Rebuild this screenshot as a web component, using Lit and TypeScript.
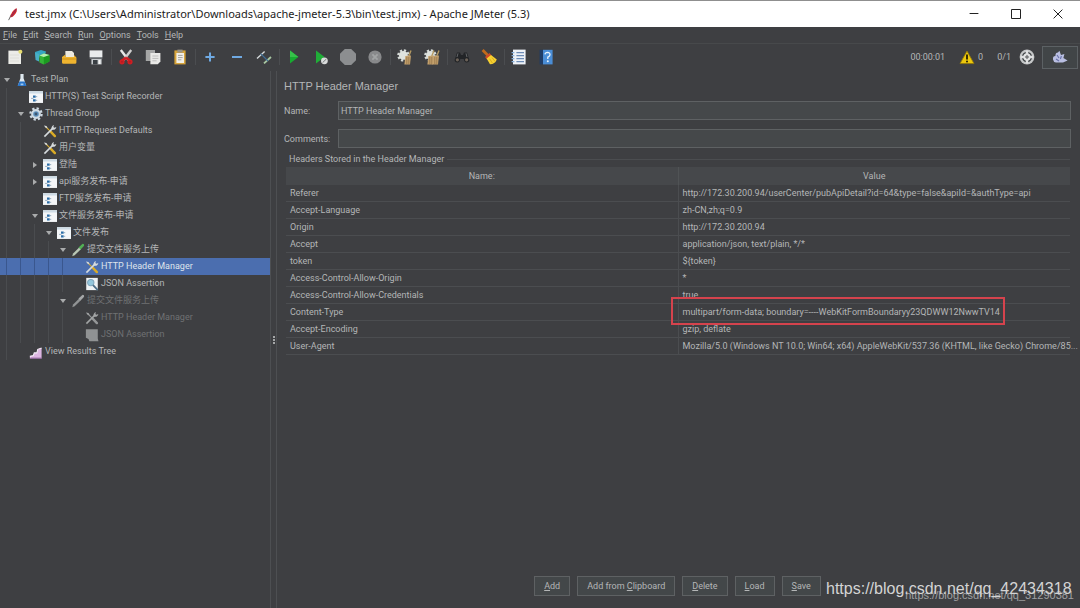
import { LitElement, html, svg, css, nothing } from "lit";
import { customElement, property, state } from "lit/decorators.js";

type Node = { text: string; level: number; icon: string; arrow?: "open" | "closed"; off?: boolean };

const TREE: Node[] = [
  { text: "Test Plan", level: 0, icon: "flask", arrow: "open" },
  { text: "HTTP(S) Test Script Recorder", level: 1, icon: "panel" },
  { text: "Thread Group", level: 1, icon: "gear", arrow: "open" },
  { text: "HTTP Request Defaults", level: 2, icon: "tools" },
  { text: "用户变量", level: 2, icon: "tools" },
  { text: "登陆", level: 2, icon: "panel", arrow: "closed" },
  { text: "api服务发布-申请", level: 2, icon: "panel", arrow: "closed" },
  { text: "FTP服务发布-申请", level: 2, icon: "panel" },
  { text: "文件服务发布-申请", level: 2, icon: "panel", arrow: "open" },
  { text: "文件发布", level: 3, icon: "panel", arrow: "open" },
  { text: "提交文件服务上传", level: 4, icon: "dropper", arrow: "open" },
  { text: "HTTP Header Manager", level: 5, icon: "tools" },
  { text: "JSON Assertion", level: 5, icon: "lens" },
  { text: "提交文件服务上传", level: 4, icon: "dropperOff", arrow: "open", off: true },
  { text: "HTTP Header Manager", level: 5, icon: "toolsOff", off: true },
  { text: "JSON Assertion", level: 5, icon: "lensOff", off: true },
  { text: "View Results Tree", level: 1, icon: "chart" },
];

const HEADERS: [string, string][] = [
  ["Referer", "http://172.30.200.94/userCenter/pubApiDetail?id=64&type=false&apiId=&authType=api"],
  ["Accept-Language", "zh-CN,zh;q=0.9"],
  ["Origin", "http://172.30.200.94"],
  ["Accept", "application/json, text/plain, */*"],
  ["token", "${token}"],
  ["Access-Control-Allow-Origin", "*"],
  ["Access-Control-Allow-Credentials", "true"],
  ["Content-Type", "multipart/form-data; boundary=----WebKitFormBoundaryy23QDWW12NwwTV14"],
  ["Accept-Encoding", "gzip, deflate"],
  ["User-Agent", "Mozilla/5.0 (Windows NT 10.0; Win64; x64) AppleWebKit/537.36 (KHTML, like Gecko) Chrome/85..."],
];

const tools = (a: string, b: string) => svg`
  <path d="M3 3 L13 13" stroke=${b} stroke-width="1.4"/>
  <path d="M9 9 L13.6 13.8" stroke=${b} stroke-width="2.8" stroke-linecap="round"/>
  <path d="M1.6 14.4 L11 5" stroke=${a} stroke-width="1.8"/>
  <path d="M10 6.4 Q8.6 2.6 12.6 1 L11.8 3.4 L13 4.4 L15.2 3.4 Q14.6 7.4 10 6.4Z" fill=${a}/>
  <path d="M1 1.6 L4 2.4 L5.4 5.2 L3 4.4Z" fill=${a}/>`;
const dropper = (a: string, b: string) => svg`
  <path d="M1.4 15 L2.4 12 L9.6 4.8 L11.6 6.8 L4.2 14Z" fill=${a}/>
  <path d="M8.6 5 L13 1 Q15.4 .8 15 3.2 L11 7.4Z" fill=${b}/>`;
const gear = (a: string, hub: string) => svg`
  <circle cx="8" cy="8" r="6.4" fill="none" stroke=${a} stroke-width="2.6" stroke-dasharray="2.6 2.4"/>
  <circle cx="8" cy="8" r="4.4" fill=${hub} stroke=${a} stroke-width="2.4"/>
  <circle cx="8" cy="8" r="1.6" fill="#3d5570"/>`;
const cog = svg`
  <circle cx="6.4" cy="6.4" r="5" fill="none" stroke="#d6dbd8" stroke-width="2.4" stroke-dasharray="2.2 1.7"/>
  <circle cx="6.4" cy="6.4" r="4.4" fill="#dfe3de"/>`;
const broom = (x: number) => svg`
  <path d=${`M${x + 3.4} 7 L${x + 5.6} 1.4`} stroke="#b59a62" stroke-width="1.4"/>
  <path d=${`M${x} 7 L${x + 5.6} 6.4 L${x + 4.6} 15.4 L${x - 1} 15.4Z`} fill="#c3a06c"/>
  <path d=${`M${x + 1.4} 8 V15 M${x + 3.4} 8 V15`} stroke="#8e6f43" stroke-width=".7"/>`;

const ICONS: Record<string, unknown> = {
  feather: svg`<path d="M3 15 L6.4 8" stroke="#555" stroke-width="1"/><path d="M5 12 Q5.4 5 12 1 Q13.6 5 9.6 9 Q8 11.6 5 12Z" fill="#d22b2b"/><path d="M6 11 L11.6 2.4" stroke="#7d2b66" stroke-width="1"/>`,
  flask: svg`<path d="M6.2 1 H9.8 V6 L12.8 14.6 H3.2 L6.2 6Z" fill="#dfe8ef"/><path d="M5 9.8 H11 L13 14.8 H3Z" fill="#2874c9"/><path d="M6.4 12 H9.6 V14 H6.4Z" fill="#9cc6ee"/>`,
  panel: svg`<path d="M0 1.4 H16 V14.8 H0Z" fill="#f4f6f8"/><path d="M0 1.4 H16 V4 H0Z" fill="#cfdce6"/><path d="M4.6 6.4 H7.6 V8.8 H4.6Z M4.6 10.6 H7.6 V13 H4.6Z" fill="#2a6ca6"/><path d="M2.4 9.6 H5 M8 7.6 H9.4 M8 11.8 H9.4" stroke="#8ca2b6" stroke-width="1"/>`,
  gear: gear("#cfdae3", "#5d91bd"),
  tools: tools("#d5dadd", "#d8aa27"),
  toolsOff: tools("#a2a4a5", "#949697"),
  dropper: dropper("#b8c6b4", "#52b055"),
  dropperOff: dropper("#919394", "#a6a8a9"),
  lens: svg`<path d="M1.4 1 H14.6 V15 H1.4Z" fill="#eff3f5"/><circle cx="6.6" cy="6.4" r="3.6" fill="#93c7dd" stroke="#7fa5bb" stroke-width="1.2"/><path d="M9.2 9.2 L14.6 15" stroke="#4c6f88" stroke-width="2"/>`,
  lensOff: svg`<path d="M1 1.4 H14.6 V12 L15.4 15 H5 L4 12.6 L1 11Z" fill="#909293"/>`,
  chart: svg`<path d="M1 15.4 V12.8 L5 12 L6 9 L9 9 L10 5 L14.4 3.4 V15.4Z" fill="#dcb6e2"/><path d="M1 13 L5 12 L6 9 L9 9 L10 5 L14.4 3.4" stroke="#f5eef7" stroke-width="1.2" fill="none"/><path d="M2 15 H14.6" stroke="#8d5c99" stroke-width="1"/>`,
  new: svg`<path d="M1.4 1.6 H14 V15 H1.4Z" fill="#ecece8"/><path d="M3 6 H12 M3 9 H12 M3 12 H12" stroke="#dcdcd6" stroke-width=".8"/><circle cx="13.4" cy="2.8" r="2" fill="#e5db70"/>`,
  cubes: svg`<path d="M1 3 L7 1 L12 2.6 L11 6 L2 10Z" fill="#35a5c2"/><path d="M1 3.4 L5 5 V12.6 L1.6 11Z" fill="#49aec6"/><path d="M5.4 6.4 L10 4.6 L15.4 6 V12.4 L9.6 15.4 L5.4 13.4Z" fill="#34b437"/><path d="M9.8 8 L15.4 6 V12.4 L9.8 15.4Z" fill="#1b9a20"/><path d="M5.4 6.4 L10 4.6 L15.4 6 L9.8 8Z" fill="#b6efb0"/>`,
  folder: svg`<path d="M4.4 2 H11 L13 4 V9 H4.4Z" fill="#ece9df"/><path d="M1 8 L4.4 5.4 V8 H13 V6 L15.4 8.6 V13.6 Q15.4 14.8 14 14.8 H2.4 Q1 14.8 1 13.6Z" fill="#efb42f"/><path d="M1 10 H15.4" stroke="#c88a13" stroke-width=".8"/>`,
  save: svg`<path d="M1.6 1.4 H14.4 V8 H1.6Z" fill="#e9ebec"/><path d="M1.6 8 H14.4 V9.6 H1.6Z" fill="#82878b"/><path d="M3.4 10 H13.6 V15.4 H3.4Z" fill="#c7cbce"/><path d="M5 11 H9.6 V15.4 H5Z" fill="#3a3f44"/><path d="M10.6 11 H12.4 V15 H10.6Z" fill="#f5f5f5"/>`,
  cut: svg`<path d="M2.8 1 L10.4 11" stroke="#e8e8e8" stroke-width="2.4"/><path d="M13.2 1 L5.6 11" stroke="#cfcfcf" stroke-width="2.4"/><path d="M8 8.6 L12 11.6 M8 8.6 L4 11.6" stroke="#cf1d22" stroke-width="2.6"/><circle cx="4" cy="12.8" r="1.6" fill="#7c2022" stroke="#cf1d22" stroke-width="2"/><circle cx="12" cy="12.8" r="1.6" fill="#7c2022" stroke="#cf1d22" stroke-width="2"/>`,
  copy: svg`<path d="M.8 1 H10 V12 H.8Z" fill="#a5a6a6"/><path d="M5.4 4 H15.4 V12.6 L12.8 15.2 H5.4Z" fill="#e9e9e7"/><path d="M7.4 7 H13.4 M7.4 9.4 H13.4 M7.4 11.8 H11.6" stroke="#b8b8b8" stroke-width=".9"/>`,
  paste: svg`<path d="M2.4 1.4 H13.6 V15.4 H2.4Z" fill="#d7a43a"/><path d="M4.4 4 H12 V14 H4.4Z" fill="#f2f0e8"/><path d="M5.4 .6 H10.6 V3.6 H5.4Z" fill="#9a9486"/><path d="M6 6.4 H10.6 M6 8.6 H10.6 M6 10.8 H9.4" stroke="#9a9a98" stroke-width=".9"/>`,
  plus: svg`<path d="M8 3.4 V12.6 M3.4 8 H12.6" stroke="#6fa9e2" stroke-width="2"/>`,
  minus: svg`<path d="M3 8 H13" stroke="#6fa9e2" stroke-width="2"/>`,
  toggle: svg`<path d="M1 9.4 L8.6 2.6" stroke="#d5dadc" stroke-width="1.4"/><path d="M8 14.4 L15 8" stroke="#a9c8a3" stroke-width="1.8"/><path d="M4.6 4.6 L12 12" stroke="#3e6e96" stroke-width="1.2"/>`,
  play: svg`<path d="M4 1.6 L12.4 8 L4 14.6Z" fill="#18aa31"/><path d="M4 1.6 L12.4 8 H4Z" fill="#36c14a"/>`,
  playNo: svg`<path d="M3 1.6 L11.6 8 L3 14.4Z" fill="#20ae38"/><circle cx="11.4" cy="11.8" r="3.4" fill="#d9dbdb"/><path d="M9.6 13.6 L13.4 10" stroke="#777b7c" stroke-width="1"/>`,
  stop: svg`<path d="M4.8 0 H11.2 L16 4.8 V11.2 L11.2 16 H4.8 L0 11.2 V4.8Z" fill="#8c8e90"/>`,
  stopX: svg`<circle cx="8" cy="8" r="6.6" fill="#88898b"/><path d="M5.4 5.4 L10.6 10.6 M10.6 5.4 L5.4 10.6" stroke="#a2a4a5" stroke-width="1.8"/>`,
  sweep: svg`${cog}${broom(8.4)}`,
  sweepAll: svg`${cog}${broom(4.4)}${broom(9.4)}`,
  find: svg`<path d="M3 3.4 H6 L7 6 H9 L10 3.4 H13 L15.4 11 Q15.4 13.4 12.6 13.4 Q10 13.4 9.8 10 H6.2 Q6 13.4 3.4 13.4 Q.6 13.4 .6 11Z" fill="#222427"/><circle cx="3.4" cy="10.8" r="1.6" fill="#6c6258"/><circle cx="12.6" cy="10.8" r="1.6" fill="#6c6258"/><path d="M4 4.4 L3 8 M12 4.4 L13 8" stroke="#75777a" stroke-width=".8"/>`,
  brush: svg`<path d="M1.6 1 L7 6.4" stroke="#c06a1c" stroke-width="2.8"/><path d="M4 8 L8.6 4 L10.6 6.6 L6 10.4Z" fill="#d04a28"/><path d="M5.6 9.6 L10 6 L15.8 10.4 Q14 15 9 15.2Z" fill="#f6d030"/><path d="M8.6 9.8 L11.4 14 M11 8.6 L14 12.4" stroke="#cf9d18" stroke-width=".7"/>`,
  list: svg`<path d="M2 .6 H14.6 V15.4 H2Z" fill="#eef2f7"/><path d="M5.4 3.6 H13 M5.4 6.6 H13 M5.4 9.6 H13 M5.4 12.6 H13" stroke="#6d8cb6" stroke-width="1.1"/><path d="M.6 3.6 H3.4 M.6 6.6 H3.4 M.6 9.6 H3.4 M.6 12.6 H3.4" stroke="#8ab2dd" stroke-width="1.2"/>`,
  help: svg`<path d="M1.6 .8 H5 V15.4 H1.6Z" fill="#1f3c66"/><path d="M5 .8 H14.6 V15.4 H5Z" fill="#4a8dd6"/><path d="M7 5.4 Q7.2 3.4 9.6 3.4 Q12.2 3.6 12 5.8 Q11.8 7.2 9.8 8.2 V10" fill="none" stroke="#e8f2fc" stroke-width="1.3"/><circle cx="9.8" cy="12.2" r="1" fill="#e8f2fc"/>`,
  warn: svg`<path d="M8 2 L15 14.6 H1Z" fill="#ecc70c" stroke="#8f7506" stroke-width=".8" stroke-linejoin="round"/><path d="M8 5.6 V10.6" stroke="#231d02" stroke-width="1.8"/><circle cx="8" cy="12.6" r="1" fill="#231d02"/>`,
  target: svg`<circle cx="8" cy="8" r="7.4" fill="#c4c6c7"/><circle cx="8" cy="8" r="4.4" fill="#e6e7e7" stroke="#44484b" stroke-width="1.5"/><path d="M8 1.6 V14.4 M1.6 8 H14.4" stroke="#dfe0e1" stroke-width="2.4"/><path d="M8 6 V10 M6 8 H10" stroke="#57595b" stroke-width="1"/>`,
  cloud: svg`<path d="M1 10.4 Q.6 7 3.4 7 Q3.4 3.6 6 3.6 L7.4 1.8 L9 6 L12.4 5 L11.4 9 L15.6 11.6 L11 13.4 H4 Q1.4 13 1 10.4Z" fill="#b9bfe2"/><path d="M5 6 L7 9 M9.4 7 L8.4 10 M4 10 L7 12" stroke="#6870a8" stroke-width="1.1"/>`,
  min: svg`<path d="M3.6 7.5 H12.4" stroke="#222"/>`,
  max: svg`<path d="M3.5 3.5 H12.5 V12.5 H3.5Z" fill="none" stroke="#222"/>`,
  close: svg`<path d="M3.6 3.6 L12.4 12.4 M12.4 3.6 L3.6 12.4" stroke="#222"/>`,
};

@customElement("ui-icon")
class UiIcon extends LitElement {
  @property() name = "";
  static styles = css`
    :host { display: block; flex: none; width: 16px; height: 16px; }
    svg { display: block; width: 100%; height: 100%; }
  `;
  render() {
    return html`<svg viewBox="0 0 16 16" aria-hidden="true">${ICONS[this.name] ?? nothing}</svg>`;
  }
}

@customElement("plan-tree")
class PlanTree extends LitElement {
  @state() selected = 11;
  static styles = css`
    :host { display: block; }
    .list { margin: 0; padding: 0; list-style: none; }
    .row {
      display: flex; align-items: stretch; width: 100%; height: 17px; padding: 0;
      border: 0; background: none; color: #b4b6b7; font: inherit; text-align: left; white-space: nowrap;
    }
    .on { background: #4b6eaf; color: #dfe4ec; }
    .off { color: #6f7173; }
    .guides { display: flex; margin-left: -7px; padding-right: 7px; }
    .guide { flex: none; width: 14px; box-sizing: border-box; border-right: 1px solid rgba(120, 124, 126, 0.22); }
    .on .guide { border-color: rgba(30, 45, 80, 0.35); }
    .arrow { flex: none; width: 14px; display: grid; place-items: center; }
    .arrow svg { width: 6px; height: 6px; }
    .icon { width: 14px; height: 14px; margin-left: 1px; align-self: center; }
    .text { padding-left: 2px; line-height: 17px; }
  `;
  render() {
    return html`<ul class="list">
      ${TREE.map(
        (n, i) => html`<li>
          <button class="row ${i === this.selected ? "on" : ""} ${n.off ? "off" : ""}" @click=${() => (this.selected = i)}>
            <span class="guides">${Array.from({ length: n.level }, () => html`<span class="guide"></span>`)}</span>
            <span class="arrow">
              ${n.arrow
                ? html`<svg viewBox="0 0 6 6"><path fill="#a9abac" d=${n.arrow === "open" ? "M0 1 H6 L3 5Z" : "M1 0 V6 L5 3Z"} /></svg>`
                : nothing}
            </span>
            <ui-icon class="icon" name=${n.icon}></ui-icon>
            <span class="text">${n.text}</span>
          </button>
        </li>`
      )}
    </ul>`;
  }
}

@customElement("header-table")
class HeaderTable extends LitElement {
  static styles = css`
    :host { display: block; }
    .table { width: 100%; table-layout: fixed; border-collapse: collapse; }
    th { height: 18px; padding: 0; background: #46484b; font-weight: normal; border-right: 1px solid #505355; }
    th:last-child { border-right: 0; }
    td { height: 16px; padding: 0 0 0 4px; line-height: 16px; border-bottom: 1px solid #4b4d50; white-space: nowrap; }
    td:first-child { border-right: 1px solid #4b4d50; }
    .marked { position: relative; }
    .mark { position: absolute; top: -7px; left: -8px; width: 330px; height: 24px; border: 2px solid #d5434d; pointer-events: none; }
  `;
  render() {
    return html`<table class="table">
      <thead><tr><th>Name:</th><th>Value</th></tr></thead>
      <tbody>
        ${HEADERS.map(
          ([k, v]) => html`<tr>
            <td>${k}</td>
            ${k === "Content-Type" ? html`<td class="marked">${v}<span class="mark"></span></td>` : html`<td>${v}</td>`}
          </tr>`
        )}
      </tbody>
    </table>`;
  }
}

const MENUS = ["File", "Edit", "Search", "Run", "Options", "Tools", "Help"];
const TOOL_GROUPS = [
  ["new", "cubes", "folder", "save"],
  ["cut", "copy", "paste"],
  ["plus", "minus", "toggle"],
  ["play", "playNo", "stop", "stopX"],
  ["sweep", "sweepAll"],
  ["find", "brush"],
  ["list", "help"],
];
const ACTIONS: [string, string, string][] = [
  ["", "A", "dd"],
  ["Add from ", "C", "lipboard"],
  ["", "D", "elete"],
  ["", "L", "oad"],
  ["", "S", "ave"],
];

@customElement("app-root")
class AppRoot extends LitElement {
  static styles = css`
    :host {
      display: flex; flex-direction: column; height: 100vh; overflow: hidden; box-sizing: border-box;
      background: #3e3f42; color: #b4b6b7; position: relative;
      font: 9px/12px Roboto, "Liberation Sans", "Noto Sans CJK SC", sans-serif;
    }
    button { font: inherit; color: inherit; }
    .title {
      display: flex; align-items: center; height: 27px; box-sizing: border-box; flex: none;
      padding: 0 14px 0 6px; background: #fff; color: #1c1c1c; border-top: 1px solid #8f8f8f;
      font: 11px/16px "Noto Sans", "Open Sans", sans-serif;
    }
    .name { flex: 1; padding-left: 5px; white-space: nowrap; }
    .feather { width: 14px; height: 14px; }
    .win { display: flex; gap: 26px; }
    .win button, .tools button { padding: 0; border: 0; background: none; }
    .menu { display: flex; gap: 6px; height: 16px; padding: 0 3px; line-height: 16px; flex: none; border-bottom: 1px solid #47494b; }
    .menu button { padding: 0; border: 0; background: none; }
    .tools { display: flex; align-items: center; height: 26px; padding: 0 2px 0 7px; flex: none; }
    .group { display: flex; gap: 11px; padding-right: 7px; margin-right: 6px; border-right: 1px solid #4b4d50; }
    .group:nth-of-type(7) { border: 0; }
    .status { display: flex; align-items: center; margin-left: auto; }
    .status .time { margin-right: 14px; }
    .status .count { margin: 0 14px 0 3px; }
    .status .ratio { margin-right: 8px; }
    .tools .log { display: grid; place-items: center; width: 36px; height: 23px; margin-left: 7px; border: 1px solid #5c6164; background: #414547; }
    .main { display: flex; flex: 1; min-height: 0; padding-top: 1px; }
    .left { width: 270px; flex: none; border-right: 1px solid #4d4f52; }
    .split { display: grid; place-items: center; width: 5px; flex: none; border-right: 1px solid #4d4f52; }
    .grip { width: 2px; height: 8px; background: repeating-linear-gradient(#a5a7a8 0 2px, transparent 2px 3px); }
    .right { display: flex; flex-direction: column; flex: 1; min-width: 0; padding: 7px 9px 12px 7px; }
    h1 { margin: 0 0 7px; font: 11px/16px "Liberation Sans", sans-serif; }
    .field { display: grid; grid-template-columns: 54px 1fr; align-items: center; margin-bottom: 9px; }
    .field + .field { margin-bottom: 5px; }
    .field input {
      height: 19px; min-width: 0; box-sizing: border-box; padding: 0 2px; border: 1px solid #5e6163;
      background: #45484a; color: inherit; font: inherit; outline: 0;
    }
    fieldset { margin: 0; padding: 2px 1px 0 2px; border: 0; min-width: 0; flex: 1; }
    legend { display: flex; align-items: center; width: 100%; box-sizing: border-box; padding: 0 0 0 3px; gap: 3px; }
    legend::after { content: ""; flex: 1; height: 1px; background: #4b4d50; }
    .actions { display: flex; justify-content: center; gap: 7px; }
    .actions button { height: 20px; padding: 0 9px; border: 1px solid #5e6163; background: #434749; white-space: nowrap; }
    .marks {
      position: absolute; right: 6px; bottom: 6px; width: 248px; height: 23px; pointer-events: none;
      white-space: nowrap; font-family: "Liberation Sans", sans-serif;
    }
    .big { position: absolute; left: 0; top: 0; font-size: 16px; line-height: 20px; color: #d4d4d4; }
    .small { position: absolute; right: 0; bottom: 0; font-size: 11px; line-height: 14px; color: #a0a1a3; }
  `;
  render() {
    return html`
      <header class="title">
        <ui-icon class="feather" name="feather"></ui-icon>
        <span class="name">test.jmx (C:\\Users\\Administrator\\Downloads\\apache-jmeter-5.3\\bin\\test.jmx) - Apache JMeter (5.3)</span>
        <div class="win">
          <button aria-label="Minimize"><ui-icon name="min"></ui-icon></button>
          <button aria-label="Maximize"><ui-icon name="max"></ui-icon></button>
          <button aria-label="Close"><ui-icon name="close"></ui-icon></button>
        </div>
      </header>
      <nav class="menu">${MENUS.map((m) => html`<button><u>${m[0]}</u>${m.slice(1)}</button>`)}</nav>
      <div class="tools">
        ${TOOL_GROUPS.map(
          (g) => html`<div class="group">${g.map((n) => html`<button aria-label=${n}><ui-icon name=${n}></ui-icon></button>`)}</div>`
        )}
        <div class="status">
          <span class="time">00:00:01</span>
          <ui-icon name="warn"></ui-icon><span class="count">0</span>
          <span class="ratio">0/1</span>
          <ui-icon name="target"></ui-icon>
          <button class="log" aria-label="log"><ui-icon name="cloud"></ui-icon></button>
        </div>
      </div>
      <main class="main">
        <aside class="left"><plan-tree></plan-tree></aside>
        <div class="split"><span class="grip"></span></div>
        <section class="right">
          <h1>HTTP Header Manager</h1>
          <div class="field"><label for="name">Name:</label><input id="name" value="HTTP Header Manager" /></div>
          <div class="field"><label for="comments">Comments:</label><input id="comments" /></div>
          <fieldset>
            <legend>Headers Stored in the Header Manager</legend>
            <header-table></header-table>
          </fieldset>
          <div class="actions">${ACTIONS.map(([a, u, b]) => html`<button>${a}<u>${u}</u>${b}</button>`)}</div>
        </section>
      </main>
      <div class="marks">
        <span class="small">https://blog.csdn.net/qq_31290381</span>
        <span class="big">https://blog.csdn.net/qq_42434318</span>
      </div>
    `;
  }
}
